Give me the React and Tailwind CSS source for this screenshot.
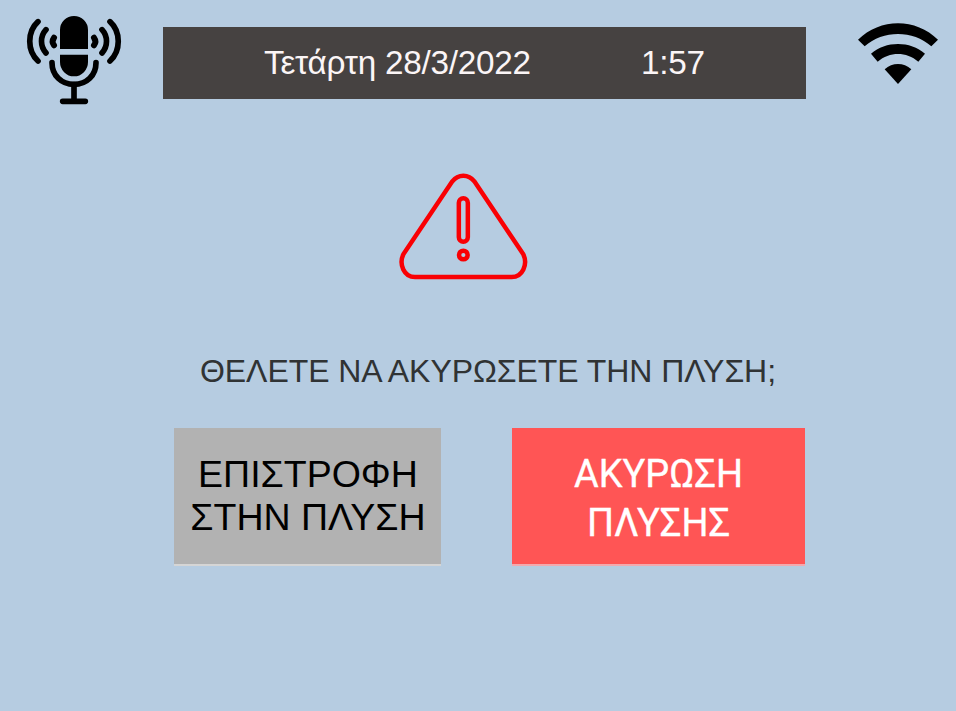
function Microphone() {
  return (
    <svg className="h-[110px] w-[120px] shrink-0" viewBox="0 0 360 330" fill="none" stroke="#000" strokeLinecap="round" aria-hidden="true">
      <path d="M138 135V78a42 42 0 0 1 84 0v57zM138 152h84v22a42 43 0 0 1-84 0z" fill="#000" stroke="none" />
      <path d="M114 176c0 38 28 65 66 65s66-27 66-65" strokeWidth="17" />
      <path d="M180 242v50M146 292h68" strokeWidth="17" />
      <path d="M72 53C39 83 39 141 72 171M288 53c33 30 33 88 0 118M96 77c-18 20-18 50 0 70M264 77c18 20 18 50 0 70" strokeWidth="17" />
      <path d="M120 101c-5 7-5 16 0 23M240 101c5 7 5 16 0 23" strokeWidth="18" />
    </svg>
  );
}

function Wifi() {
  return (
    <svg className="mt-[6px] h-[85px] w-[111px] shrink-0" viewBox="0 0 333 255" aria-hidden="true">
      <path d="M39 89C105 23 213 23 279 89L259 109C204 60 114 60 59 109Z" />
      <path d="M78 131C122 92 196 92 240 131L220 155C184 124 134 124 98 155Z" />
      <path d="M119 178C142 157 176 157 199 178L159 222Z" />
    </svg>
  );
}

function Warning() {
  return (
    <svg className="h-[126px] w-[150px]" viewBox="0 0 450 378" fill="none" stroke="#f90004" strokeWidth="13.500" aria-hidden="true">
      <path d="M187 52Q200 35 220 35T253 52L400 271C414 301 398 339 365 339H75C42 339 26 301 40 271Z" />
      <rect x="206.500" y="102.500" width="27" height="131" rx="13.500" />
      <circle cx="220" cy="273" r="13" />
    </svg>
  );
}

export default function App() {
  return (
    <main className="flex h-[711px] w-[956px] flex-col overflow-hidden bg-[#b6cce1] pt-1 font-['Liberation_Sans',Arial,sans-serif]">
      <header className="flex h-[110px] items-start pl-[14px]">
        <Microphone />
        <div className="ml-[29px] mt-[23px] flex h-[72px] w-[643px] shrink-0 items-center whitespace-nowrap bg-[#464241] pl-[101px] text-[33.3px] leading-[72px] tracking-[-0.24px] text-[#fbf5f6]">
          <span className="w-[377px]">Τετάρτη 28/3/2022</span>
          <span>1:57</span>
        </div>
        <div className="ml-[39px]"><Wifi /></div>
      </header>
      <div className="ml-[390px] mt-[50px] h-[126px]"><Warning /></div>
      <h1 className="ml-[200px] mt-[61px] h-10 whitespace-nowrap text-[32px] leading-10 tracking-[-0.07px] text-[#303334]">ΘΕΛΕΤΕ ΝΑ ΑΚΥΡΩΣΕΤΕ ΤΗΝ ΠΛΥΣΗ;</h1>
      <div className="mt-[37px] flex items-start pl-[174px]">
        <button className="h-[138px] w-[267px] whitespace-nowrap border-b-2 border-[#d5d5d5] bg-[#b2b2b2] pl-px text-[37.5px] leading-[43px] text-black">
          ΕΠΙΣΤΡΟΦΗ<br />ΣΤΗΝ ΠΛΥΣΗ
        </button>
        <button className="ml-[71px] h-[138px] w-[293px] whitespace-nowrap border-b-2 border-[#f3a9ae] bg-[#ff5555] pt-1.5 font-[Roboto,sans-serif] text-[37.9px] leading-[49px] text-white [-webkit-text-stroke:0.35px_white]">
          ΑΚΥΡΩΣΗ<br />ΠΛΥΣΗΣ
        </button>
      </div>
    </main>
  );
}
